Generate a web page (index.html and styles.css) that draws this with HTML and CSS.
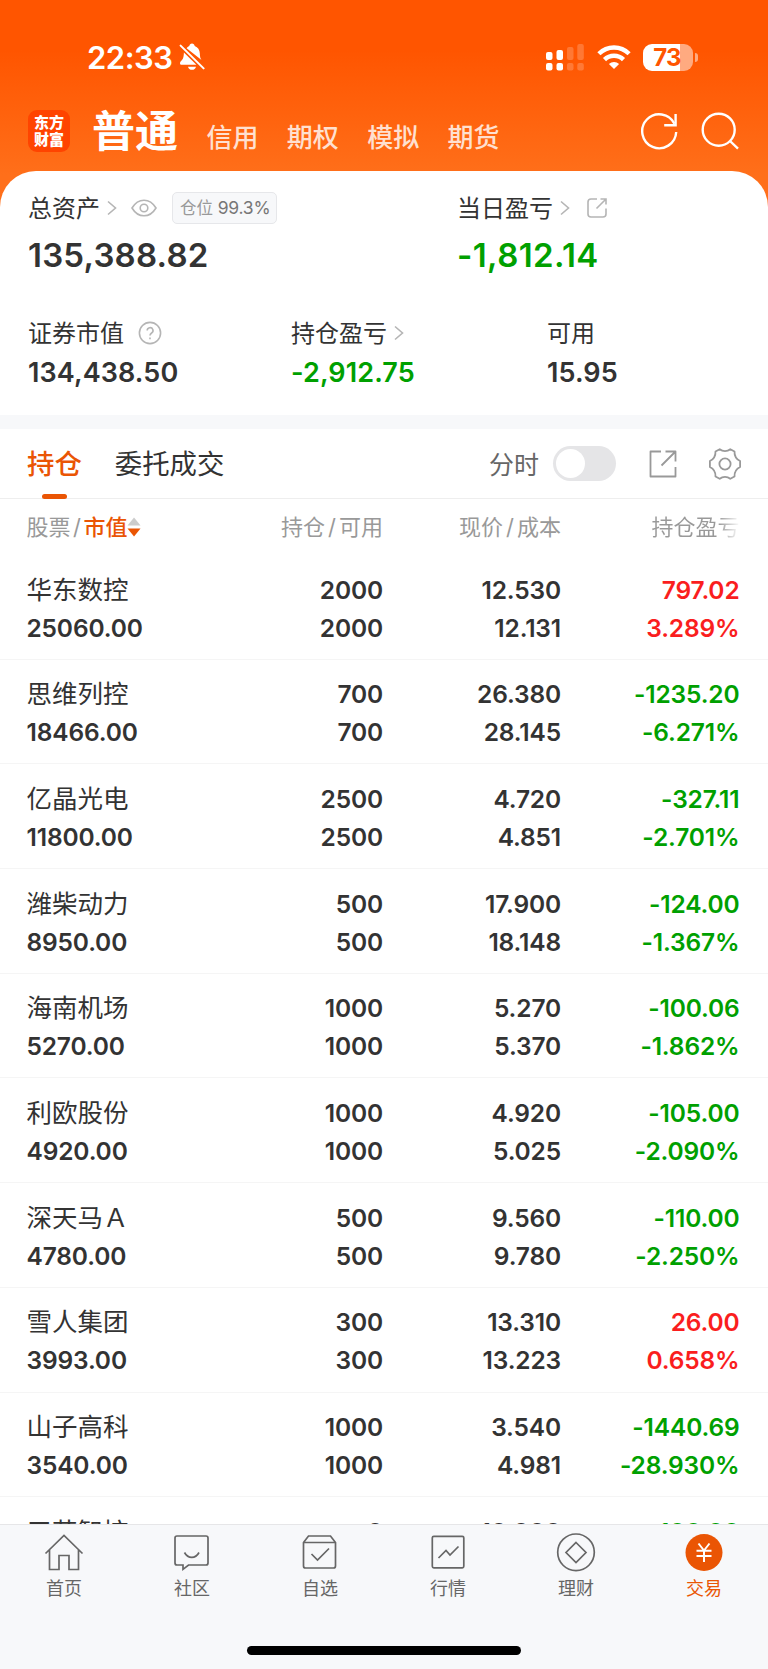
FILE: index.html
```html
<!DOCTYPE html>
<html lang="zh-CN">
<head>
  <meta charset="UTF-8">
  <title>普通交易 - 持仓</title>
  <link rel="stylesheet" href="styles.css">
</head>
<body>

<header class="header">
  <div class="status-bar">
    <span class="clock">22:33</span>
    <svg class="mute" width="26" height="28" viewBox="0 0 26 28">
      <path d="M7.600 5.200C8.800 3.800 9.600 3.200 10.300 3 10.500 1.500 11.600.6 13 .6s2.500.9 2.700 2.400c3.200 1.200 5 4 5.100 7.200.1 3.600.6 5.300 1.700 6.800zM4.900 9.500 17.400 21.800H2.800c-1.200 0-1.800-.7-1.800-1.600 0-1.300 1-2 2-3.200 1.400-1.600 1.800-3.600 1.900-7.500zM9 23.700h8c-.4 1.900-2 3.100-4 3.100s-3.600-1.200-4-3.100z" fill="#fff"/>
      <path d="M1.600 2.600 24.600 25.400" stroke="#fff" stroke-width="2" stroke-linecap="round"/>
    </svg>
    <svg class="signal" width="40" height="28" viewBox="0 0 40 28">
      <rect x="1" y="9" width="6.500" height="8" rx="2"/>
      <rect x="11.500" y="7" width="6.500" height="10" rx="2"/>
      <rect x="1" y="20" width="6.500" height="7.500" rx="2"/>
      <rect x="11.500" y="20" width="6.500" height="7.500" rx="2"/>
      <g opacity=".2">
        <rect x="22" y="4" width="6.500" height="13" rx="2"/>
        <rect x="32.300" y="1" width="6.500" height="16" rx="2"/>
        <rect x="22" y="20" width="6.500" height="7.500" rx="2"/>
        <rect x="32.300" y="20" width="6.500" height="7.500" rx="2"/>
      </g>
    </svg>
    <svg class="wifi" width="34" height="26" viewBox="0 0 34 26" stroke="#fff" stroke-width="4.400">
      <path d="M1.900 9.800C10.200 1.400 23.800 1.400 32.100 9.800"/>
      <path d="M7.500 15.600c5.200-5.200 13.800-5.200 19 0"/>
      <path d="M17 25 11.900 19.900c2.900-2.700 7.300-2.700 10.200 0z" fill="#fff" stroke="none"/>
    </svg>
    <div class="battery"><span>73</span></div>
    <i class="battery-tip"></i>
  </div>

  <nav class="top-nav">
    <div class="logo">东方<br>财富</div>
    <a class="current">普通</a>
    <a>信用</a>
    <a>期权</a>
    <a>模拟</a>
    <a>期货</a>
    <svg class="refresh" width="38" height="38" viewBox="0 0 38 38" stroke="#fff" stroke-width="2.400">
      <path d="M36.200 20A17 17 0 1 1 34.500 11.800"/>
      <path d="M35.600 2v11.200H24.200"/>
    </svg>
    <svg class="search" width="38" height="38" viewBox="0 0 38 38" stroke="#fff" stroke-width="2.400">
      <circle cx="17.700" cy="17.700" r="16"/>
      <path d="M29 29 37 36.600"/>
    </svg>
  </nav>
</header>

<section class="summary">
  <div class="totals">
    <div class="item">
      <div class="label">总资产
        <svg class="arrow" width="10" height="16" viewBox="0 0 10 16"><path d="M1 1.500 8.500 8 1 14.500"/></svg>
        <svg class="eye" width="26" height="18" viewBox="0 0 26 18"><path d="M1 9C4 4 8.200 1.200 13 1.200S22 4 25 9c-3 5-7.200 7.800-12 7.800S4 14 1 9z"/><circle cx="13" cy="9" r="3.800"/></svg>
        <span class="badge">仓位 <b>99.3%</b></span>
      </div>
      <div class="amount">135,388.82</div>
    </div>
    <div class="item">
      <div class="label">当日盈亏
        <svg class="arrow" width="10" height="16" viewBox="0 0 10 16"><path d="M1 1.500 8.500 8 1 14.500"/></svg>
        <svg class="share" width="20" height="20" viewBox="0 0 20 20"><path d="M10 1H4a3 3 0 0 0-3 3v12a3 3 0 0 0 3 3h12a3 3 0 0 0 3-3v-5.500M9.500 10.500 18.500 1.500M13.500 1H19v5.500"/></svg>
      </div>
      <div class="amount down">-1,812.14</div>
    </div>
  </div>
  <div class="details">
    <div class="item">
      <div class="label">证券市值
        <svg class="help" width="24" height="24" viewBox="0 0 24 24"><circle cx="12" cy="12" r="10.600"/><path d="M9.200 9.600a2.900 2.900 0 1 1 4.400 2.400c-1 .7-1.600 1.200-1.600 2.500M12 16.400v1.800"/></svg>
      </div>
      <div class="value">134,438.50</div>
    </div>
    <div class="item">
      <div class="label">持仓盈亏
        <svg class="arrow" width="10" height="16" viewBox="0 0 10 16"><path d="M1 1.500 8.500 8 1 14.500"/></svg>
      </div>
      <div class="value down">-2,912.75</div>
    </div>
    <div class="item">
      <div class="label">可用</div>
      <div class="value">15.95</div>
    </div>
  </div>
</section>

<section class="holdings">
  <div class="tabs">
    <a class="tab active">持仓</a>
    <a class="tab">委托成交</a>
    <span class="switch-label">分时</span>
    <span class="switch"></span>
    <svg class="export" width="28" height="28" viewBox="0 0 28 28"><path d="M12 1.500H1.500v25h25V17M12.500 15.500 26.500 1.500M16.500 1.500h10V11.500"/></svg>
    <svg class="gear" width="32" height="32" viewBox="0 0 32 32"><path d="M10.700 1.200C12.300 2.500 14 3.100 16 3.100s3.700-.6 5.300-1.900l4.200 2.300C25.300 8.300 27 11 31.100 13v6c-4.100 2-5.800 4.700-5.600 9.500l-4.200 2.300c-1.600-1.300-3.300-1.900-5.300-1.900s-3.700.6-5.300 1.900l-4.200-2.300C6.700 23.700 5 21 .9 19v-6C5 11 6.700 8.300 6.500 3.500z"/><circle cx="16" cy="16" r="5.600"/></svg>
  </div>

  <div class="row head">
    <span class="sort">股票<i>/</i><em>市值</em><svg width="14" height="20" viewBox="0 0 14 20"><path d="M7 .5 13.500 8.500H.5z" fill="#ccc"/><path d="M7 19.500 .5 11.500h13z" fill="#ea5504"/></svg></span>
    <span>持仓<i>/</i>可用</span>
    <span>现价<i>/</i>成本</span>
    <span class="fade">持仓盈亏</span>
  </div>

  <div class="list" id="list"></div>
</section>

<footer class="tab-bar">
  <a>
    <svg width="40" height="40" viewBox="0 0 40 40"><path d="M1.500 20.500 20 2.500l18.500 18M5.500 17v19.500h9.500V22.500h10v14h9.500V17"/></svg>
    首页
  </a>
  <a>
    <svg width="40" height="40" viewBox="0 0 40 40"><path d="M5 3h29a2 2 0 0 1 2 2v25a2 2 0 0 1-2 2H16.500L11 36.300V32H5a2 2 0 0 1-2-2V5a2 2 0 0 1 2-2z"/><path d="M12.500 19.500c3.500 6.500 11 6.500 14.500 0"/></svg>
    社区
  </a>
  <a>
    <svg width="40" height="40" viewBox="0 0 40 40"><path d="M8.500 3h22l5 6.500V33a2 2 0 0 1-2 2h-28a2 2 0 0 1-2-2V9.500zM3.500 9.500h32M11.500 21l6 6 11.500-11.500"/></svg>
    自选
  </a>
  <a>
    <svg width="40" height="40" viewBox="0 0 40 40"><rect x="4.300" y="3.300" width="31.500" height="31.500" rx="1.500"/><path d="M10.500 25l7.500-7.500 4 4.500 8.500-8.500"/></svg>
    行情
  </a>
  <a>
    <svg width="40" height="40" viewBox="0 0 40 40"><circle cx="20" cy="19.300" r="18.300"/><path d="M20 9.500l10 10-10 10-10-10z"/></svg>
    理财
  </a>
  <a class="active">
    <svg width="40" height="40" viewBox="0 0 40 40"><circle class="coin" cx="20" cy="19.500" r="18.500"/><path class="yen" d="M14.500 10.500l5.500 7 5.500-7M20 17.500V29M12.500 17.700h15M12.500 22.900h15"/></svg>
    交易
  </a>
  <i class="home-indicator"></i>
</footer>

<script>
// 名称, 市值, 持仓, 可用, 现价, 成本, 盈亏, 盈亏比例
const holdings = [
  ['华东数控', '25060.00', '2000', '2000', '12.530', '12.131', '797.02', '3.289%'],
  ['思维列控', '18466.00', '700', '700', '26.380', '28.145', '-1235.20', '-6.271%'],
  ['亿晶光电', '11800.00', '2500', '2500', '4.720', '4.851', '-327.11', '-2.701%'],
  ['潍柴动力', '8950.00', '500', '500', '17.900', '18.148', '-124.00', '-1.367%'],
  ['海南机场', '5270.00', '1000', '1000', '5.270', '5.370', '-100.06', '-1.862%'],
  ['利欧股份', '4920.00', '1000', '1000', '4.920', '5.025', '-105.00', '-2.090%'],
  ['深天马Ａ', '4780.00', '500', '500', '9.560', '9.780', '-110.00', '-2.250%'],
  ['雪人集团', '3993.00', '300', '300', '13.310', '13.223', '26.00', '0.658%'],
  ['山子高科', '3540.00', '1000', '1000', '3.540', '4.981', '-1440.69', '-28.930%'],
  ['三花智控', '', '0', '', '10.000', '', '-100.00', '']
];

document.getElementById('list').innerHTML = holdings.map(h => {
  const color = h[6].startsWith('-') ? 'down' : 'up';
  return `<div class="row">
    <div><span class="name">${h[0]}</span><span>${h[1]}</span></div>
    <div><span>${h[2]}</span><span>${h[3]}</span></div>
    <div><span>${h[4]}</span><span>${h[5]}</span></div>
    <div class="${color}"><span>${h[6]}</span><span>${h[7]}</span></div>
  </div>`;
}).join('');
</script>

</body>
</html>
```
FILE: styles.css
```css
* { box-sizing: border-box; }
body { margin: 0; width: 768px; height: 1669px; overflow: hidden; display: flex; flex-direction: column; background: #fff; color: #333; font-family: Inter, "Noto Sans CJK SC", sans-serif; }
svg { display: block; flex: none; fill: none; }
i, em { font-style: normal; }
.down { color: #00a000; }
.up { color: #fa1e1e; }

/* 顶部 */
.header { flex: none; height: 210px; background: linear-gradient(#ff5500 50px, #ff6f1a 175px); color: #fff; }
.status-bar { display: flex; align-items: center; height: 60px; padding: 0 70px 0 87px; margin-top: 27px; }
.clock { font-size: 31px; font-weight: 600; width: 92px; letter-spacing: -.5px; }
.mute { margin-right: auto; }
.signal { margin-right: 12px; fill: #fff; }
.wifi { margin-right: 12px; }
.battery { width: 50px; height: 27px; padding-right: 2px; border-radius: 9px; background: linear-gradient(90deg, #fff 73%, #ffaa80 73%); color: #ff5500; font-size: 24px; font-weight: 700; line-height: 27px; text-align: center; letter-spacing: -.8px; }
.battery-tip { width: 3px; height: 9px; margin-left: 2px; border-radius: 0 4px 4px 0; background: #ffaa80; }
.top-nav { display: flex; align-items: center; height: 84px; padding: 3px 29px 0 28px; font-size: 26px; font-weight: 500; }
.logo { width: 42px; height: 42px; padding-top: 4px; margin-right: 22px; border-radius: 9px; background: #ff4400; font-size: 15px; font-weight: 900; line-height: 17px; text-align: center; }
.top-nav a { margin-right: 28.400px; padding-top: 9px; color: #ffe0d0; }
.top-nav .current { padding: 0 0 5px; color: #fff; font-size: 43px; font-weight: 700; }
.refresh { margin-left: auto; margin-right: 23px; }

/* 资产 */
.summary { flex: none; height: 244px; margin-top: -39px; padding: 17px 28px 0; border-radius: 36px 36px 0 0; background: #fff; }
.totals { display: grid; grid-template-columns: 429px 1fr; }
.details { display: grid; grid-template-columns: 263px 256px 1fr; margin-top: 28px; }
.label { display: flex; align-items: center; height: 36px; margin-bottom: 1px; font-size: 24px; white-space: nowrap; }
.label svg { margin-top: 3px; fill: none; stroke: #b5b5b5; stroke-width: 1.6; }
.arrow { margin-left: 7px; }
.eye { margin-left: 14px; }
.badge { width: 105px; height: 32px; margin: 3px 0 0 15px; padding-left: 7px; border: 1px solid #e6e7ea; border-radius: 5px; background: #f7f8fa; color: #999; font-size: 16.500px; line-height: 30px; }
.badge b { color: #777; font-size: 17.500px; font-weight: 400; letter-spacing: -.2px; }
.share { margin-left: 17px; }
.help { margin-left: 14px; }
.amount { height: 60px; font-size: 33px; font-weight: 600; line-height: 60px; letter-spacing: .2px; }
.amount.down { letter-spacing: .4px; }
.value { height: 42px; margin-top: 3px; font-size: 27px; font-weight: 600; line-height: 42px; letter-spacing: .1px; }

/* 持仓 */
.holdings { flex: 1; min-height: 0; overflow: hidden; border-top: 14px solid #f7f8fa; }
.tabs { display: flex; align-items: center; height: 70px; padding: 0 27px; border-bottom: 1px solid #eee; font-size: 27.400px; }
.tab { height: 70px; margin-right: 33px; line-height: 71px; }
.tab.active { display: flex; flex-direction: column; align-items: center; color: #ea5504; font-weight: 500; }
.tab.active::after { content: ""; width: 25px; height: 5px; margin-top: -6px; border-radius: 3px; background: #ea5504; }
.switch-label { margin-left: auto; padding-bottom: 2px; color: #666; font-size: 25px; }
.switch { width: 63px; height: 35px; margin: 0 33px 0 14px; padding: 3px; border-radius: 18px; background: #e5e5e7; }
.switch::after { content: ""; display: block; width: 29px; height: 29px; border-radius: 50%; background: #fff; }
.export { margin-right: 32px; }
.export, .gear { stroke: #999; stroke-width: 1.8; stroke-linejoin: round; }
.row { display: grid; grid-template-columns: 178.500px 178px 178px 178.500px; height: 104.7px; padding: 15.500px 28px 0 26.500px; border-bottom: 1.5px solid #f5f5f5; font-size: 24.500px; font-weight: 600; line-height: 38px; letter-spacing: -.15px; text-align: right; }
.row div span { display: block; }
.row div:first-child { text-align: left; }
.row .name { font-size: 25.500px; font-weight: 400; letter-spacing: 0; }
.row.head { height: 56px; padding-top: 10px; border: 0; color: #999; font-size: 22px; font-weight: 400; line-height: 36px; letter-spacing: 0; }
.head i { margin: 0 3px; }
.sort i { margin: 0 2.500px; }
.head em { color: #ea5504; font-weight: 500; }
.sort { display: flex; align-items: center; height: 36px; }
.fade { background: linear-gradient(90deg, #999 88%, #fff); -webkit-background-clip: text; background-clip: text; color: transparent; }

/* 底部 */
.tab-bar { position: relative; flex: none; display: flex; height: 145px; border-top: 1px solid #e6e6e8; background: #f7f8fa; }
.tab-bar a { flex: 1; display: flex; flex-direction: column; align-items: center; padding-top: 8px; color: #666; font-size: 18px; line-height: 32px; }
.tab-bar svg { stroke: #666; stroke-width: 1.700; }
.tab-bar .active { color: #ea5504; }
.tab-bar .coin { fill: #ea5504; stroke: none; }
.tab-bar .yen { stroke: #fff; stroke-width: 2; }
.home-indicator { position: absolute; left: 247px; bottom: 14px; width: 274px; height: 9px; border-radius: 5px; background: #000; }
```
